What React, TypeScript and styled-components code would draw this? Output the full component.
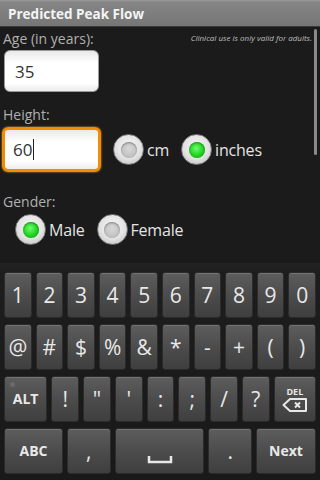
import React from 'react';
import styled, { createGlobalStyle } from 'styled-components';

const Global = createGlobalStyle`
  html, body {
    margin: 0;
    padding: 0;
    background: #000;
  }
  * {
    box-sizing: border-box;
  }
`;

const Screen = styled.div`
  width: 320px;
  height: 480px;
  display: flex;
  flex-direction: column;
  background: #1b1b1b;
  font-family: 'Open Sans', 'DejaVu Sans', sans-serif;
  overflow: hidden;
`;

const TitleBar = styled.div`
  height: 27px;
  flex-shrink: 0;
  display: flex;
  align-items: center;
  padding: 1px 0 0 8px;
  background: linear-gradient(#9a9a9a 0%, #858585 8%, #767676 100%);
  border-bottom: 1px solid #3a3a3a;
  color: #f4f4f4;
  font-weight: 700;
  font-size: 13.5px;
`;

const Content = styled.div`
  position: relative;
  flex: 1;
  padding: 2px 0 0 3px;
  display: flex;
  flex-direction: column;
`;

const ScrollBar = styled.div`
  position: absolute;
  right: 3px;
  top: 2px;
  width: 3px;
  height: 126px;
  border-radius: 2px;
  background: #8a8a8a;
`;

const TopLine = styled.div`
  display: flex;
  justify-content: space-between;
  align-items: flex-start;
`;

const Label = styled.div`
  color: #b0b0b0;
  font-size: 14px;
  line-height: 19px;
`;

const Note = styled.div`
  color: #bdbdbd;
  font-size: 8px;
  font-style: italic;
  padding: 3px 8px 0 0;
`;

const Field = styled.div<{ $focused?: boolean }>`
  width: ${(p) => (p.$focused ? '99px' : '95px')};
  height: ${(p) => (p.$focused ? '45px' : '42px')};
  margin-left: ${(p) => (p.$focused ? '-1px' : '1px')};
  border-radius: 6px;
  background: linear-gradient(#e9e9e9, #ffffff 30%, #ffffff 80%, #ececec);
  border: ${(p) => (p.$focused ? '3px solid #f28c00' : '1px solid #9a9a9a')};
  box-shadow: ${(p) => (p.$focused ? '0 0 2px #ffb040' : 'none')};
  display: flex;
  align-items: center;
  padding-left: ${(p) => (p.$focused ? '8px' : '10px')};
  color: #333;
  font-size: 17px;
`;

const Caret = styled.span`
  display: inline-block;
  width: 1px;
  height: 21px;
  background: #222;
  margin-left: 1px;
`;

const Row = styled.div<{ $gap?: number; $indent?: number }>`
  display: flex;
  align-items: center;
  gap: ${(p) => p.$gap ?? 12}px;
  padding-left: ${(p) => p.$indent ?? 0}px;
`;

const Section = styled.div<{ $top: number }>`
  margin-top: ${(p) => p.$top}px;
  display: flex;
  flex-direction: column;
  gap: 3px;
`;

const Choice = styled.div`
  display: flex;
  align-items: center;
  gap: 3px;
  color: #e4e4e4;
  font-size: 16px;
  letter-spacing: -0.2px;
`;

const RadioOuter = styled.div`
  width: 31px;
  height: 31px;
  border-radius: 50%;
  background: radial-gradient(circle at 50% 40%, #f6f6f6 0%, #e2e2e2 55%, #b8b8b8 100%);
  border: 1px solid #7a7a7a;
  display: flex;
  align-items: center;
  justify-content: center;
`;

const RadioInner = styled.div<{ $checked?: boolean }>`
  width: 16px;
  height: 16px;
  border-radius: 50%;
  background: ${(p) =>
    p.$checked
      ? 'radial-gradient(circle at 45% 40%, #6dff6d 0%, #1fd21f 55%, #0c9a0c 100%)'
      : 'radial-gradient(circle at 50% 40%, #d8d8d8 0%, #c0c0c0 70%, #a8a8a8 100%)'};
  box-shadow: inset 0 1px 2px rgba(0, 0, 0, 0.35);
`;

const Radio = ({ label, checked }: { label: string; checked?: boolean }) => (
  <Choice>
    <RadioOuter>
      <RadioInner $checked={checked} />
    </RadioOuter>
    {label}
  </Choice>
);

const Keyboard = styled.div`
  flex-shrink: 0;
  height: 217px;
  background: linear-gradient(#222222, #1d1d1d 10px, #191919);
  padding: 9px 4px 5px 4px;
  display: flex;
  flex-direction: column;
  gap: 6px;
`;

const KeyRow = styled.div`
  display: flex;
  gap: 4px;
  height: 46px;
`;

const Key = styled.div<{ $grow?: number; $small?: boolean; $align?: string }>`
  position: relative;
  flex: ${(p) => p.$grow ?? 1} 1 0;
  min-width: 0;
  border-radius: 3px;
  background: linear-gradient(#5d5d5d, #4c4c4c 50%, #3f3f3f);
  border: 1px solid #2b2b2b;
  box-shadow: inset 0 1px 0 rgba(255, 255, 255, 0.14);
  display: flex;
  flex-direction: column;
  align-items: center;
  justify-content: ${(p) => p.$align ?? 'center'};
  color: #e8e8e8;
  font-size: ${(p) => (p.$small ? '14px' : '21px')};
  font-weight: ${(p) => (p.$small ? 700 : 400)};
  line-height: 1;
`;

const AltDot = styled.span`
  position: absolute;
  left: 5px;
  top: 5px;
  width: 5px;
  height: 5px;
  border-radius: 50%;
  background: #6a6a6a;
`;

const DelText = styled.span`
  font-size: 9px;
  font-weight: 700;
  margin-bottom: 2px;
`;

const BackspaceIcon = () => (
  <svg width="26" height="14" viewBox="0 0 26 14">
    <path d="M8 1 H24 V13 H8 L1.5 7 Z" fill="none" stroke="#e8e8e8" strokeWidth="2" strokeLinejoin="round" />
    <path d="M13 4.5 L18 9.5 M18 4.5 L13 9.5" stroke="#e8e8e8" strokeWidth="2" />
  </svg>
);

const SpaceIcon = () => (
  <svg width="26" height="9" viewBox="0 0 26 9">
    <path d="M2 1 V7 H24 V1" fill="none" stroke="#e8e8e8" strokeWidth="2.5" />
  </svg>
);

const row1 = ['1', '2', '3', '4', '5', '6', '7', '8', '9', '0'];
const row2 = ['@', '#', '$', '%', '&', '*', '-', '+', '(', ')'];
const row3 = ['!', '"', "'", ':', ';', '/', '?'];

export default function App() {
  return (
    <>
      <Global />
      <Screen>
        <TitleBar>Predicted Peak Flow</TitleBar>
        <Content>
          <ScrollBar />
          <TopLine>
            <Label>Age (in years):</Label>
            <Note>Clinical use is only valid for adults.</Note>
          </TopLine>
          <Section $top={2}>
            <Field>35</Field>
          </Section>
          <Section $top={13}>
            <Label>Height:</Label>
            <Row $gap={12}>
              <Field $focused>
                60
                <Caret />
              </Field>
              <Radio label="cm" />
              <Radio label="inches" checked />
            </Row>
          </Section>
          <Section $top={20}>
            <Label>Gender:</Label>
            <Row $gap={12} $indent={12}>
              <Radio label="Male" checked />
              <Radio label="Female" />
            </Row>
          </Section>
        </Content>
        <Keyboard>
          <KeyRow>
            {row1.map((k) => (
              <Key key={k}>{k}</Key>
            ))}
          </KeyRow>
          <KeyRow>
            {row2.map((k) => (
              <Key key={k}>{k}</Key>
            ))}
          </KeyRow>
          <KeyRow>
            <Key $grow={1.6} $small>
              <AltDot />
              ALT
            </Key>
            {row3.map((k) => (
              <Key key={k}>{k}</Key>
            ))}
            <Key $grow={1.56}>
              <DelText>DEL</DelText>
              <BackspaceIcon />
            </Key>
          </KeyRow>
          <KeyRow>
            <Key $grow={59} $small>
              ABC
            </Key>
            <Key $grow={43}>,</Key>
            <Key $grow={91} $align="flex-end" style={{ paddingBottom: 9 }}>
              <SpaceIcon />
            </Key>
            <Key $grow={43}>.</Key>
            <Key $grow={60} $small>
              Next
            </Key>
          </KeyRow>
        </Keyboard>
      </Screen>
    </>
  );
}
